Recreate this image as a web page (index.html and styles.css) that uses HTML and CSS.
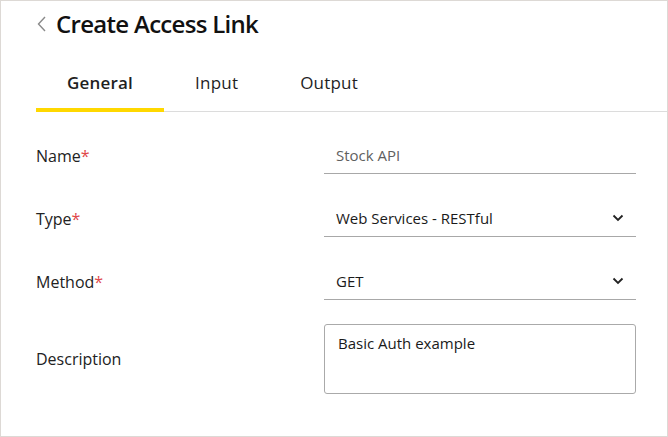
FILE: index.html
```html
<!DOCTYPE html>
<html lang="en">
<head>
    <meta charset="UTF-8">
    <meta name="viewport" content="width=device-width, initial-scale=1.0">
    <title>Create Access Link</title>
    <link rel="stylesheet" href="styles.css">
</head>
<body>
    <div class="panel">
        <div class="header">
            <span class="back">
                <svg width="10" height="16" viewBox="0 0 10 16"><path d="M8 1 L1.5 8 L8 15" fill="none" stroke="#8a8a8a" stroke-width="1.4"/></svg>
            </span>
            <h1 class="title">Create Access Link</h1>
        </div>
        <div class="tabs">
            <div class="tab active">General</div>
            <div class="tab">Input</div>
            <div class="tab">Output</div>
        </div>
        <div class="form">
            <label class="form-label">Name<span class="req">*</span></label>
            <div class="field">
                <span class="value muted">Stock API</span>
            </div>
            <label class="form-label">Type<span class="req">*</span></label>
            <div class="field select">
                <span class="value">Web Services - RESTful</span>
                <svg class="caret" width="12" height="8" viewBox="0 0 12 8"><path d="M1.5 1.5 L6 6 L10.5 1.5" fill="none" stroke="#222" stroke-width="1.8"/></svg>
            </div>
            <label class="form-label">Method<span class="req">*</span></label>
            <div class="field select">
                <span class="value">GET</span>
                <svg class="caret" width="12" height="8" viewBox="0 0 12 8"><path d="M1.5 1.5 L6 6 L10.5 1.5" fill="none" stroke="#222" stroke-width="1.8"/></svg>
            </div>
            <label class="form-label desc">Description</label>
            <div class="textarea">Basic Auth example</div>
        </div>
    </div>
</body>
</html>
```

FILE: styles.css
```css
* {
    box-sizing: border-box;
}
body {
    margin: 0;
    font-family: 'Open Sans', 'Noto Sans', sans-serif;
    color: #1f1f1f;
    background: #fff;
}
.panel {
    width: 668px;
    height: 437px;
    border: 1px solid #ddd9d5;
    background: #fff;
}
.header {
    display: flex;
    align-items: center;
    padding: 8px 0 0 36px;
    height: 38px;
}
.back {
    display: flex;
    width: 19px;
}
.title {
    margin: 0;
    font-size: 24px;
    font-weight: 600;
    line-height: 28px;
    letter-spacing: -0.7px;
    color: #111;
}
.tabs {
    display: flex;
    margin: 23px 0 0 35px;
    border-bottom: 1px solid #dcdcdc;
}
.tab {
    padding: 8px 31px 12px;
    font-size: 17px;
    line-height: 26px;
    letter-spacing: 0.2px;
    color: #1f1f1f;
    border-bottom: 4px solid transparent;
    margin-bottom: -1px;
}
.tab.active {
    font-weight: 600;
    border-bottom-color: #ffd800;
}
.form {
    display: grid;
    grid-template-columns: 288px 312px;
    row-gap: 26px;
    padding: 25px 0 0 35px;
    align-items: center;
}
.form-label {
    font-size: 16px;
    color: #222;
}
.req {
    color: #e0484a;
}
.field {
    display: flex;
    align-items: center;
    height: 37px;
    padding: 0 12px;
    border-bottom: 1px solid #a8a8a8;
    font-size: 15px;
}
.value {
    flex: 1;
    color: #1a1a1a;
}
.value.muted {
    color: #5f5f5f;
}
.desc {
    margin-top: -2px;
}
.textarea {
    height: 70px;
    margin-top: -2px;
    padding: 8px 13px;
    border: 1px solid #aaa;
    border-radius: 3px;
    font-size: 15px;
    line-height: 20px;
    color: #1a1a1a;
}
```
